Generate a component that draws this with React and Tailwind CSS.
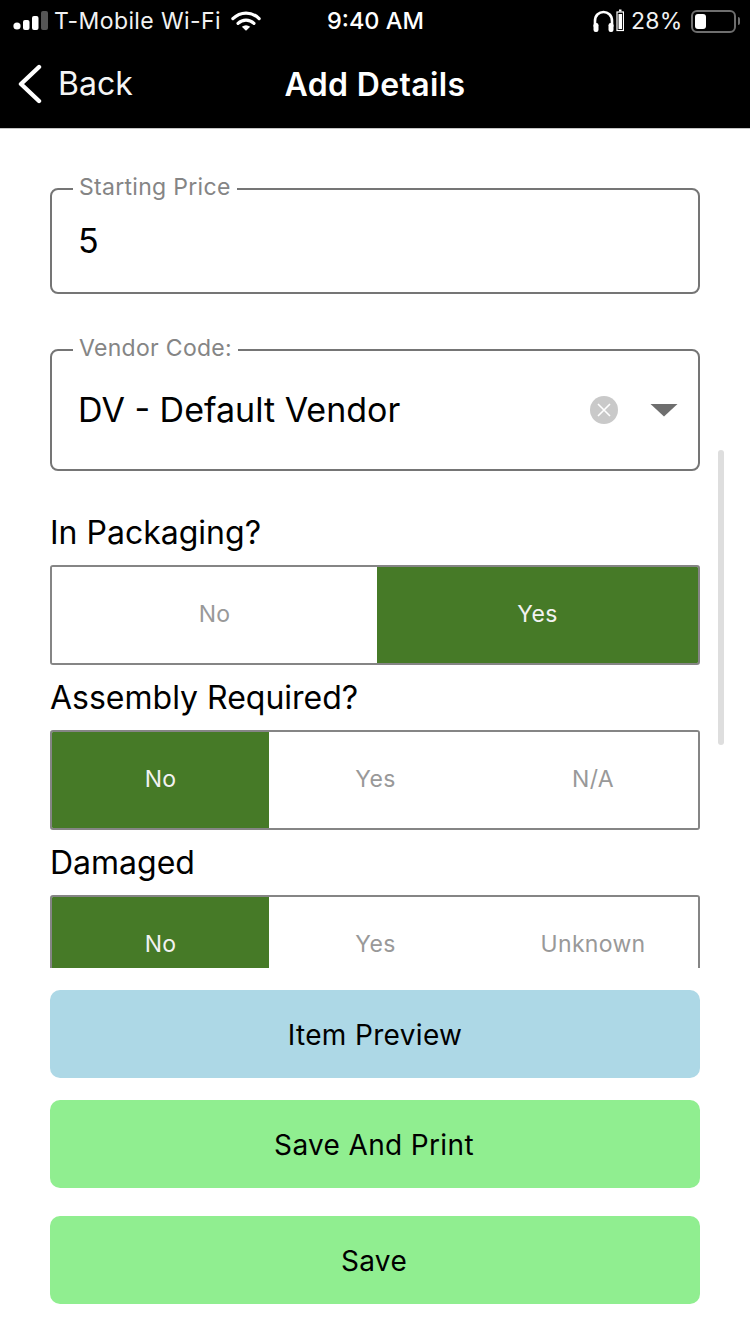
const font = { fontFamily: "Inter, 'Noto Sans', sans-serif" };

function Seg({ options, active, widths }) {
  return (
    <div className="flex h-[100px] rounded-[3px] border-2 border-[#858585] overflow-hidden">
      {options.map((o, i) => (
        <div
          key={o}
          className={`flex items-center justify-center pb-[1px] text-[23px] tracking-[0.3px] ${i === active ? "bg-[#467a27] text-[#f2f2f2]" : "bg-white text-[#999999]"} ${widths[i]}`}
        >
          {o}
        </div>
      ))}
    </div>
  );
}

function Field({ label, height, children }) {
  return (
    <div className={`relative rounded-[8px] border-2 border-[#757575] ${height} flex items-center pb-[2px] pl-[26px]`}>
      <span className="absolute left-[21px] top-[-16px] bg-white px-[6px] text-[23px] leading-[27px] tracking-[0.3px] text-[#858585]">{label}</span>
      {children}
    </div>
  );
}

function Btn({ children, cls }) {
  return (
    <div className={`flex h-[88px] items-center justify-center rounded-[10px] pt-[2px] text-[28px] tracking-[0.35px] text-black ${cls}`}>{children}</div>
  );
}

export default function App() {
  return (
    <div style={font} className="relative flex h-[1334px] w-[750px] flex-col overflow-hidden bg-white">
      <header className="h-[129px] shrink-0 border-b border-[#c4c4c4] bg-black text-white">
        <div className="relative flex h-[42px] items-center pl-[13px] text-[23px] text-[#f2f2f2]">
          <svg width="36" height="20" viewBox="0 0 36 20" className="shrink-0">
            <circle cx="4" cy="15" r="3.6" fill="#fff" />
            <rect x="10" y="9" width="6.5" height="10" rx="2" fill="#fff" />
            <rect x="19" y="5" width="6.5" height="14" rx="2" fill="#fff" />
            <rect x="28" y="0" width="7" height="19" rx="2" fill="#555" />
          </svg>
          <span className="ml-[5px] w-[171px] whitespace-nowrap tracking-[0.4px]">T-Mobile Wi-Fi</span>
          <svg width="30" height="22" viewBox="0 0 32 22" className="ml-[6px] shrink-0">
            <path d="M2 8.5 C10 0.5 22 0.5 30 8.5" fill="none" stroke="#fff" strokeWidth="3.4" strokeLinecap="round" />
            <path d="M7.5 13.5 C12.5 8.8 19.5 8.8 24.5 13.5" fill="none" stroke="#fff" strokeWidth="3.4" strokeLinecap="round" />
            <path d="M11.5 17.2 Q16 13.6 20.5 17.2 L16 21.5 Z" fill="#fff" />
          </svg>
          <span className="ml-[66px] whitespace-nowrap text-[23.5px] font-medium text-white">9:40 AM</span>
          <svg width="32" height="24" viewBox="0 0 32 24" className="ml-[168px] shrink-0">
            <path d="M3 18 V12 C3 0 20 0 20 12 V18" fill="none" stroke="#fff" strokeWidth="2.6" />
            <rect x="1.5" y="14" width="5" height="9" rx="2.2" fill="#fff" />
            <rect x="16.5" y="14" width="5" height="9" rx="2.2" fill="#fff" />
            <rect x="25" y="3" width="6.5" height="18.5" fill="none" stroke="#fff" strokeWidth="1.2" />
            <rect x="26.5" y="5" width="3.5" height="15" fill="#fff" />
            <rect x="27" y="0.5" width="2.5" height="2" fill="#fff" />
          </svg>
          <span className="ml-[7px] whitespace-nowrap tracking-[0.3px]">28%</span>
          <div className="relative ml-[8px] flex h-[23px] w-[45px] shrink-0 items-center rounded-[6px] border-2 border-[#6e6e6e] pl-[2px]">
            <div className="h-[15px] w-[11px] rounded-[3px] bg-white" />
            <div className="absolute right-[-6px] top-[5px] h-[8px] w-[2px] rounded-r bg-[#6e6e6e]" />
          </div>
        </div>
        <div className="relative flex h-[86px] items-center justify-center">
          <div className="absolute left-[18px] top-[22px] flex items-center">
            <svg width="24" height="40" viewBox="0 0 24 40">
              <path d="M21 3 L3 20 L21 37" fill="none" stroke="#fff" strokeWidth="4.4" strokeLinecap="round" strokeLinejoin="round" />
            </svg>
            <span className="ml-[16px] text-[32px] leading-[40px] text-[#f5f5f5]">Back</span>
          </div>
          <h1 className="text-[32px] font-semibold leading-[40px] tracking-[0.35px]">Add Details</h1>
        </div>
      </header>

      <main className="relative h-[839px] shrink-0 overflow-hidden px-[50px] pt-[59px] text-black">
        <Field label="Starting Price" height="h-[106px]">
          <span className="text-[34px]">5</span>
        </Field>
        <div className="mt-[55px]">
          <Field label="Vendor Code:" height="h-[122px]">
            <span className="flex-1 text-[34px]">DV - Default Vendor</span>
            <svg width="28" height="28" viewBox="0 0 28 28" className="mr-[32px] mt-[2px] shrink-0">
              <circle cx="14" cy="14" r="14" fill="#c9c9c9" />
              <path d="M8 8 L20 20 M20 8 L8 20" stroke="#fff" strokeWidth="1.6" />
            </svg>
            <svg width="28" height="14" viewBox="0 0 28 14" className="mr-[20px] mt-[2px] shrink-0">
              <path d="M0.5 1 H27.5 L14 13.5 Z" fill="#6e6e6e" />
            </svg>
          </Field>
        </div>

        <div className="mt-[42px] text-[32px] leading-[40px]">In Packaging?</div>
        <div className="mt-[12px]">
          <Seg options={["No", "Yes"]} active={1} widths={["w-[325px]", "flex-1"]} />
        </div>
        <div className="mt-[13px] text-[32px] leading-[40px]">Assembly Required?</div>
        <div className="mt-[12px]">
          <Seg options={["No", "Yes", "N/A"]} active={0} widths={["w-[217px]", "w-[213px]", "flex-1 pl-[6px]"]} />
        </div>
        <div className="mt-[13px] text-[32px] leading-[40px]">Damaged</div>
        <div className="mt-[12px]">
          <Seg options={["No", "Yes", "Unknown"]} active={0} widths={["w-[217px]", "w-[213px]", "flex-1 pl-[6px]"]} />
        </div>
      </main>

      <div className="absolute left-[718px] top-[450px] h-[295px] w-[6px] rounded-full bg-[#dedede]" />

      <footer className="px-[50px] pt-[22px]">
        <Btn cls="bg-[#add8e6]">Item Preview</Btn>
        <div className="mt-[22px]"><Btn cls="bg-[#90ee90] pr-[2px]">Save And Print</Btn></div>
        <div className="mt-[28px]"><Btn cls="bg-[#90ee90] pr-[2px]">Save</Btn></div>
      </footer>
    </div>
  );
}
